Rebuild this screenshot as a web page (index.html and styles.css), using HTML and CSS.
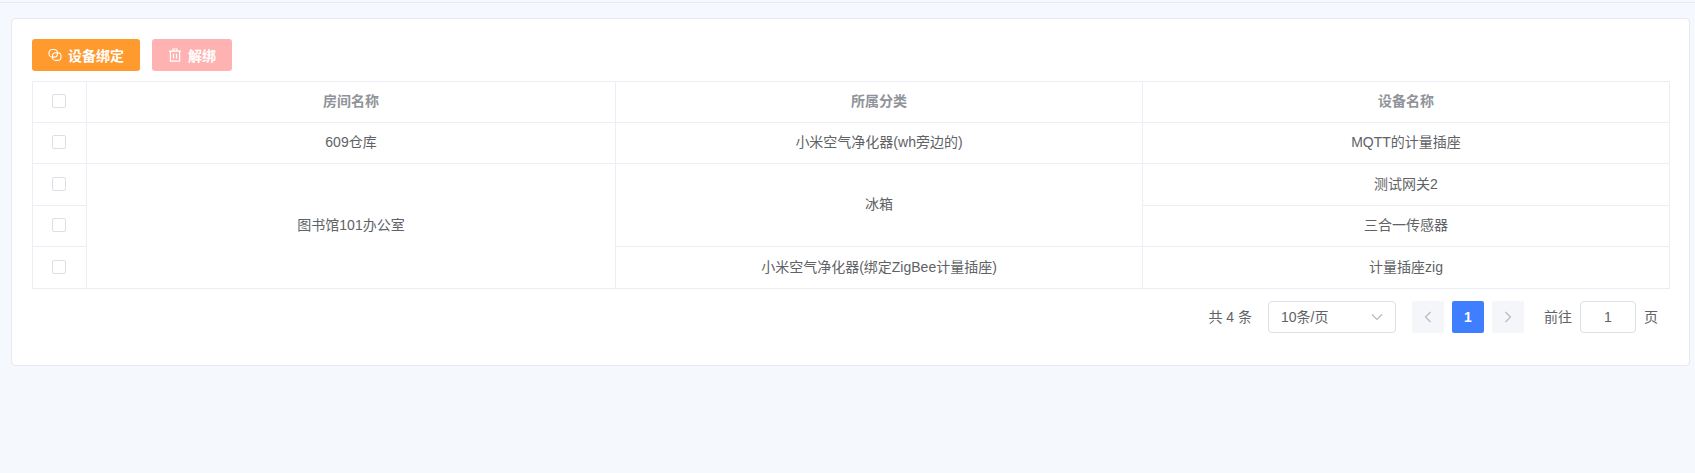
FILE: index.html
```html
<!DOCTYPE html>
<html lang="zh">
<head>
<meta charset="utf-8">
<title>设备绑定</title>
<link rel="stylesheet" href="styles.css">
</head>
<body>
<div class="page">
  <div class="card">
    <div class="toolbar">
      <button class="btn btn-orange">
        <svg class="btn-icon" viewBox="0 0 14 14" fill="none" stroke="#fff" stroke-width="1.1"><rect x="1" y="1.5" width="8.4" height="7.6" rx="3.4"/><rect x="4.4" y="4.8" width="8.6" height="7.6" rx="3.4"/></svg>
        设备绑定
      </button>
      <button class="btn btn-pink">
        <svg class="btn-icon" viewBox="0 0 14 14" fill="none" stroke="#fff" stroke-width="1.2"><path d="M1 3.2h12M5 3.2V1h4v2.2M2.4 3.2v10h9.2v-10M5.5 5.8v4.8M8.5 5.8v4.8"/></svg>
        解绑
      </button>
    </div>
    <table class="grid">
      <colgroup><col class="c0"><col class="c1"><col class="c2"><col class="c3"></colgroup>
      <thead>
        <tr class="r41"><th><span class="check"></span></th><th>房间名称</th><th>所属分类</th><th>设备名称</th></tr>
      </thead>
      <tbody>
        <tr class="r41"><td><span class="check"></span></td><td>609仓库</td><td>小米空气净化器(wh旁边的)</td><td>MQTT的计量插座</td></tr>
        <tr class="r42"><td><span class="check"></span></td><td rowspan="3">图书馆101办公室</td><td rowspan="2">冰箱</td><td>测试网关2</td></tr>
        <tr class="r41"><td><span class="check"></span></td><td>三合一传感器</td></tr>
        <tr class="r42"><td><span class="check"></span></td><td>小米空气净化器(绑定ZigBee计量插座)</td><td>计量插座zig</td></tr>
      </tbody>
    </table>
    <div class="pager">
      <span class="total">共 4 条</span>
      <div class="select">
        <span>10条/页</span>
        <svg class="chev" viewBox="0 0 12 8" fill="none" stroke="#b4b7bf" stroke-width="1.1"><path d="M1 1.5l5 5 5-5"/></svg>
      </div>
      <button class="page-btn"><svg class="arrow" viewBox="0 0 8 12" fill="none" stroke="#b4b7bf" stroke-width="1.1"><path d="M6.5 1L1.5 6l5 5"/></svg></button>
      <button class="page-btn page-active">1</button>
      <button class="page-btn"><svg class="arrow" viewBox="0 0 8 12" fill="none" stroke="#b4b7bf" stroke-width="1.1"><path d="M1.5 1l5 5-5 5"/></svg></button>
      <span class="goto">前往</span>
      <div class="jump">1</div>
      <span class="unit">页</span>
    </div>
  </div>
</div>
</body>
</html>
```
FILE: styles.css
```css
* { box-sizing: border-box; }
html, body { margin: 0; height: 100%; }
body {
  background: #f5f8fd;
  font-family: "Liberation Sans", "Noto Sans CJK SC", sans-serif;
  font-size: 14px;
  color: #606266;
  overflow: hidden;
}
.page {
  height: 471px;
  border-top: 1px solid #e6e9f2;
  margin-top: 2px;
  padding: 15px 5px 0 11px;
}
.card {
  height: 348px;
  background: #fff;
  border: 1px solid #e6e9f2;
  border-radius: 4px;
  padding: 20px 20px 0 20px;
}
.toolbar { display: flex; gap: 12px; height: 32px; margin-bottom: 10px; }
.btn {
  display: flex;
  align-items: center;
  justify-content: center;
  gap: 6px;
  height: 32px;
  border: 0;
  border-radius: 3px;
  color: #fff;
  font: bold 14px "Liberation Sans", "Noto Sans CJK SC", sans-serif;
  padding: 0;
}
.btn-orange { background: #ff9a2e; width: 108px; }
.btn-pink { background: #ffb2b2; width: 80px; }
.btn-icon { width: 14px; height: 14px; }
.grid {
  width: 1637px;
  border-collapse: collapse;
  table-layout: fixed;
  border: 1px solid #ebeef5;
}
.c0 { width: 54px; }
.c1 { width: 529px; }
.c2 { width: 527px; }
.c3 { width: 527px; }
.r41 { height: 41px; }
.r42 { height: 42px; }
.grid th, .grid td {
  border: 1px solid #ebeef5;
  text-align: center;
  padding: 0 0 2px;
  font-weight: normal;
  vertical-align: middle;
  line-height: 20px;
}
.grid th { font-weight: bold; color: #909399; }
.check {
  display: block;
  width: 14px;
  height: 14px;
  margin: 0 auto 0 19px;
  border: 1px solid #dcdfe6;
  border-radius: 2px;
  background: #fff;
}
.pager {
  display: flex;
  align-items: center;
  justify-content: flex-end;
  height: 32px;
  margin-top: 12px;
  padding-right: 11px;
}
.total, .goto, .unit, .select span { padding-bottom: 2px; }
.total { margin-right: 16px; }
.select {
  display: flex;
  align-items: center;
  justify-content: space-between;
  width: 128px;
  height: 32px;
  border: 1px solid #dcdfe6;
  border-radius: 4px;
  padding: 0 12px;
  margin-right: 16px;
}
.chev { width: 12px; height: 8px; }
.page-btn {
  width: 32px;
  height: 32px;
  margin-right: 8px;
  border: 0;
  border-radius: 2px;
  background: #f5f6fa;
  display: flex;
  align-items: center;
  justify-content: center;
  padding: 0;
  color: #fff;
  font: bold 14px "Liberation Sans", sans-serif;
}
.page-active { background: #3f7fff; }
.arrow { width: 8px; height: 12px; }
.goto { margin-left: 12px; margin-right: 8px; }
.jump {
  width: 56px;
  height: 32px;
  border: 1px solid #dcdfe6;
  border-radius: 4px;
  display: flex;
  align-items: center;
  justify-content: center;
  margin-right: 8px;
}
```
